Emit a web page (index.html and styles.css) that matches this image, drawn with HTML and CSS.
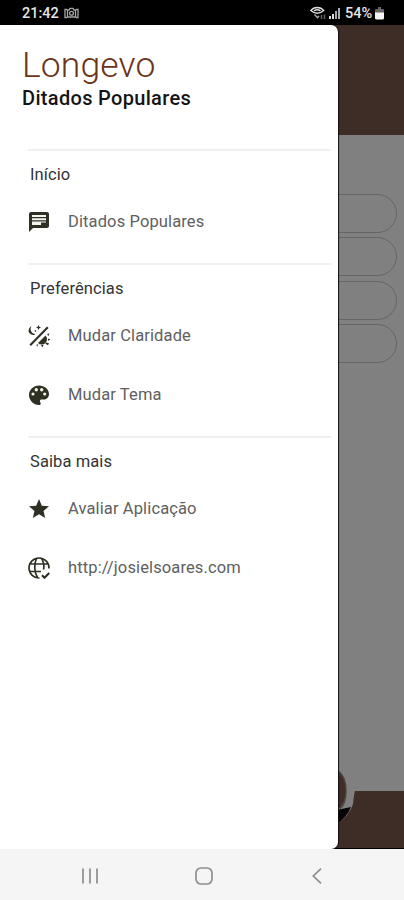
FILE: index.html
```html
<!DOCTYPE html>
<html lang="pt-BR">
<head>
<meta charset="UTF-8">
<meta name="viewport" content="width=device-width, initial-scale=1.0">
<title>Longevo</title>
<link rel="stylesheet" href="styles.css">
</head>
<body>
<header class="status-bar">
  <span class="clock">21:42</span>
  <svg class="camera" width="15" height="12" viewBox="0 0 15 12" fill="none" stroke="#a5a5a5" stroke-width="1.3">
    <path d="M3 2.5H1v8h2M12 2.5h2v8h-2M4 3h1l1-1.7h3L10 3h1.500v7H3.500V3z"/>
    <circle cx="7.500" cy="6.300" r="1.900"/>
  </svg>
  <div class="status-right">
    <svg width="17" height="15" viewBox="0 0 17 15" fill="none" stroke="#ddd" stroke-width="1.400">
      <path d="M.8 4.500C4 .4 10.500 .4 13.700 4.500Q7.300 10 .8 4.500zM4 5q3.300-2.500 6.500 0"/>
      <path d="M4.500 8.500l3 3.200L9 10" stroke="#aaa"/>
      <path d="M11.500 13V9M14.500 8.500V13" stroke="#666"/>
    </svg>
    <svg class="signal" width="11" height="11" viewBox="0 0 11 11" fill="#ddd">
      <path d="M0 8h2v3H0zM3 6h2v5H3z"/>
      <path d="M6 3h2v8H6zM9 0h2v11H9z" fill="#aaa"/>
    </svg>
    <span class="battery-label">54%</span>
    <svg width="9" height="13" viewBox="0 0 9 13">
      <path d="M3 0h3v2h2q1 0 1 1v3H0V3q0-1 1-1h2z" fill="#666"/>
      <path d="M0 5.500h9V11q0 1.500-1.500 1.500h-6Q0 12.500 0 11z" fill="#f5f5f5"/>
    </svg>
  </div>
</header>

<main class="screen">
  <div class="page">
    <div class="page-header"></div>
    <div class="page-content">
      <div class="pill"></div>
      <div class="pill"></div>
      <div class="pill"></div>
      <div class="pill"></div>
    </div>
    <div class="page-footer">
      <svg class="fab" width="20" height="60" viewBox="0 0 20 60">
        <path d="M0 0h18v23q-1 3-2 13-3 11-16 20z" fill="#808080"/>
        <path d="M0 42l14-3Q10 49 0 56z" fill="#060404"/>
        <path d="M0 2Q9 8 9 22T0 42z" fill="#412d28"/>
        <path d="M0 2Q9 8 9 22T3 41" fill="none" stroke="#4b4643" stroke-width="1.500"/>
      </svg>
    </div>
  </div>

  <aside class="drawer">
    <h1>Longevo</h1>
    <h2>Ditados Populares</h2>

    <section class="menu-group">
      <h3>Início</h3>
      <a class="menu-item">
        <svg class="icon" viewBox="0 0 24 24"><path d="M20 2H4c-1.100 0-2 .9-2 2v18l4-4h14c1.100 0 2-.9 2-2V4c0-1.100-.9-2-2-2z"/><path fill="#f4f4ee" d="M5 5h14v10H5z"/><path d="M5 7h14v1.300H5zM5 10.300h14v1.300H5zM14 12.500h5V15h-5z"/></svg>
        <span>Ditados Populares</span>
      </a>
    </section>

    <section class="menu-group">
      <h3>Preferências</h3>
      <a class="menu-item">
        <svg class="icon" viewBox="0 0 24 24">
          <path d="M3.200 21.200L20.800 3.200" fill="none" stroke="#2f3024" stroke-width="2.100"/>
          <path d="M4.500 2A5.300 5.300 0 0 0 8.500 10.200 4.800 4.800 0 0 1 1.500 7.500Q1.500 3.500 4.500 2z"/>
          <path d="M11.500 1l.8 1.700 1.700.8-1.700.8-.8 1.700-.8-1.700L9 3.500l1.700-.8zM8.500 6l1 1-1 1-1-1z"/>
          <path d="M11 19l7.500-7.500A5.300 5.300 0 0 1 11 19zM20 10l2.500-.5-1 2.500zM21 14.500l2.500 1-2.500 1.200zM19 18.500l3 .8-1 2-2.500-1.500zM14 21h2.500l-1 2.500zM9.500 20.500h2L10 22.800z"/>
        </svg>
        <span>Mudar Claridade</span>
      </a>
      <a class="menu-item">
        <svg class="icon" viewBox="0 0 24 24"><path d="M12 2.500C6.500 2.500 2 6.800 2 12s4.500 10 10 10c.9 0 1.700-.7 1.700-1.600 0-.5-.2-.8-.4-1.100-.3-.3-.4-.7-.4-1.100 0-.9.700-1.600 1.600-1.600h2c3 0 5.500-2.500 5.500-5.600 0-4.700-4.500-8.500-10-8.500z"/><g fill="#f4f4e8"><circle cx="17.700" cy="11" r="1.600"/><circle cx="14.700" cy="6.800" r="1.700"/><circle cx="9.300" cy="6.800" r="1.700"/><circle cx="6" cy="11" r="1.600"/></g></svg>
        <span>Mudar Tema</span>
      </a>
    </section>

    <section class="menu-group">
      <h3>Saiba mais</h3>
      <a class="menu-item">
        <svg class="icon" viewBox="0 0 24 24"><path d="M12 17.270L18.180 21l-1.640-7.030L22 9.240l-7.190-.61L12 2 9.190 8.630 2 9.240l5.460 4.730L5.820 21z"/></svg>
        <span>Avaliar Aplicação</span>
      </a>
      <a class="menu-item">
        <svg class="icon outline" viewBox="0 0 24 24">
          <path d="M12.500 22A10 10 0 1 1 22 12.500M3 8h18M3 15.500h11M9.500 2.500C7 8 7 16 10.500 21.500M14.500 2.500c2.500 3.500 2.700 7.500 2.200 11"/>
          <path d="M15 19.200l2.500 2.500 4.700-4.700" stroke-width="2.100"/>
        </svg>
        <span>http://josielsoares.com</span>
      </a>
    </section>
  </aside>
</main>

<nav class="nav-bar">
  <svg width="18" height="18" viewBox="0 0 18 18" fill="none" stroke="#8d8d8d" stroke-width="1.700"><path d="M2 1.500v15M9 1.500v15M16 1.500v15"/></svg>
  <svg width="18" height="18" viewBox="0 0 18 18" fill="none" stroke="#8d8d8d" stroke-width="1.700"><rect x="1" y="1" width="16" height="16" rx="5"/></svg>
  <svg width="18" height="18" viewBox="0 0 18 18" fill="none" stroke="#8d8d8d" stroke-width="1.700"><path d="M13 1.700L5.300 9l7.700 7.300"/></svg>
</nav>
</body>
</html>
```
FILE: styles.css
```css
* {
  box-sizing: border-box;
}
body {
  margin: 0;
  height: 900px;
  display: flex;
  flex-direction: column;
  font-family: Roboto, "Liberation Sans", sans-serif;
  background-color: #000;
  overflow: hidden;
}
.status-bar {
  height: 25px;
  flex-shrink: 0;
  display: flex;
  align-items: center;
  padding: 1px 20px 0 22px;
  background-color: #000;
  color: #e6e6e6;
}
.clock {
  font-size: 14.5px;
  font-weight: 500;
  width: 38px;
}
.camera {
  margin-left: 4px;
}
.status-right {
  display: flex;
  align-items: center;
  margin-left: auto;
}
.signal {
  margin: 1px 5px 0 2px;
}
.battery-label {
  font-size: 14.5px;
  font-weight: 500;
  width: 30px;
}
.screen {
  position: relative;
  height: 824px;
  flex-shrink: 0;
  overflow: hidden;
}
.page {
  height: 100%;
  display: flex;
  flex-direction: column;
  background-color: #808080;
  border-bottom: 1px solid #000;
}
.page-header {
  height: 110px;
  background-color: #3e2c26;
}
.page-content {
  flex: 1;
  display: flex;
  flex-direction: column;
  gap: 4.300px;
  padding: 59px 7px 0;
}
.pill {
  height: 39px;
  border: 1px solid #656565;
  border-radius: 20px;
}
.page-footer {
  position: relative;
  height: 57px;
  background-color: #3e2c26;
}
.fab {
  position: absolute;
  left: 337px;
  top: -23px;
}
.drawer {
  position: absolute;
  top: 0;
  left: 0;
  width: 338px;
  height: 824px;
  padding: 0 7px 0 22px;
  background-color: #fff;
  border-radius: 0 7px 7px 0;
  box-shadow: 1px 0 1px #111;
}
h1, h2, h3 {
  margin: 0;
}
h1 {
  margin-top: 19px;
  font-size: 35.5px;
  line-height: 42px;
  font-weight: 300;
  color: #6b351a;
  letter-spacing: 0.1px;
}
h2 {
  margin-bottom: 39px;
  font-size: 20px;
  line-height: 24px;
  font-weight: 500;
  letter-spacing: 0.32px;
  color: #151515;
}
.menu-group {
  margin-left: 6px;
  padding-bottom: 12px;
  border-top: 2px solid #f0f0f0;
}
h3 {
  height: 41px;
  padding: 12px 0 0 2px;
  font-size: 16.5px;
  line-height: 23px;
  font-weight: 400;
  letter-spacing: 0.1px;
  color: #333;
}
.menu-item {
  display: flex;
  align-items: center;
  height: 59px;
  color: #606060;
  font-size: 16.5px;
  letter-spacing: 0.12px;
}
.icon {
  width: 24px;
  height: 24px;
  margin: 1px 17px 0 -1px;
  fill: #2f3024;
}
.icon.outline {
  fill: none;
  stroke: #2f3024;
  stroke-width: 1.7;
}
.nav-bar {
  flex: 1;
  display: flex;
  justify-content: space-between;
  align-items: center;
  padding: 3px 78px 0 81px;
  background-color: #f5f5f5;
}
```
